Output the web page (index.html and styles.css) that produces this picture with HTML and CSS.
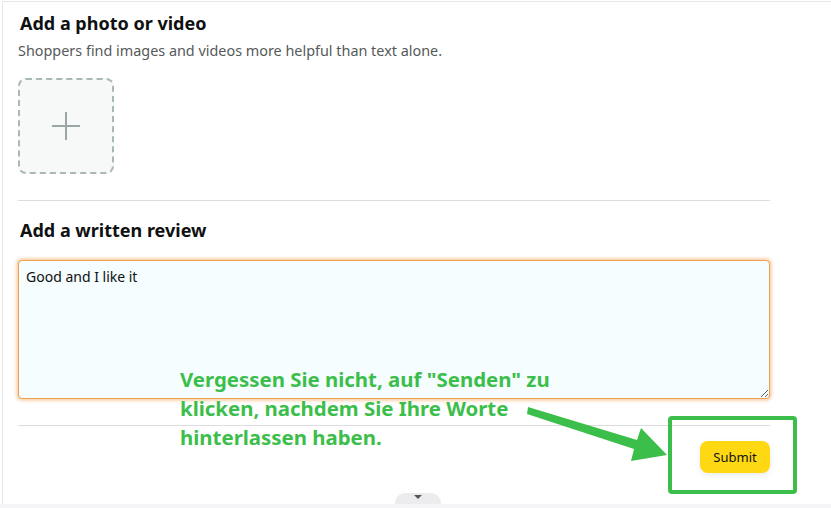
FILE: index.html
```html
<!DOCTYPE html>
<html lang="en">
<head>
  <meta charset="UTF-8">
  <meta name="viewport" content="width=device-width, initial-scale=1.0">
  <title>Review</title>
  <link rel="stylesheet" href="styles.css">
</head>
<body>
  <div class="page">
    <section class="section">
      <h2 class="title">Add a photo or video</h2>
      <p class="hint">Shoppers find images and videos more helpful than text alone.</p>
      <button class="upload">
        <svg width="30" height="30" viewBox="0 0 30 30">
          <path d="M15 1 V29 M1 15 H29" stroke="#9aa5a6" stroke-width="2" fill="none"/>
        </svg>
      </button>
    </section>
    <section class="section written">
      <h2 class="title">Add a written review</h2>
      <textarea class="review">Good and I like it</textarea>
    </section>
    <div class="footer">
      <button class="submit">Submit</button>
    </div>
    <div class="tab"><span class="tab-arrow"></span></div>
  </div>
  <div class="bottom-band"></div>

  <div class="note">Vergessen Sie nicht, auf "Senden" zu<br>klicken, nachdem Sie Ihre Worte<br>hinterlassen haben.</div>
  <svg class="arrow" width="831" height="508" viewBox="0 0 831 508">
    <path d="M528 407 L637 440 L641 428 L667 455 L631 461 L634 449 L527 414 Z" fill="#3cbe4b"/>
  </svg>
  <div class="highlight"></div>
</body>
</html>
```

FILE: styles.css
```css
body {
  margin: 0;
  font-family: "Noto Sans", "Open Sans", Arial, sans-serif;
  background-color: #fff;
  color: #0f1111;
  width: 831px;
  height: 508px;
  overflow: hidden;
  position: relative;
}

.page {
  margin-left: 2px;
  margin-top: 1px;
  border-left: 1px solid #e7e7e7;
  border-top: 1px solid #e7e7e7;
  height: 502px;
  padding: 0 61px 0 15px;
  position: relative;
}

.section {
  border-bottom: 1px solid #dddddd;
  padding-top: 9px;
}

.title {
  margin: 0 0 0 2px;
  font-size: 18px;
  font-weight: 700;
  line-height: 24px;
}

.hint {
  margin: 6px 0 0 0;
  font-size: 14.4px;
  color: #565959;
  line-height: 20px;
}

.upload {
  display: flex;
  align-items: center;
  justify-content: center;
  width: 96px;
  height: 96px;
  margin: 17px 0 26px 0;
  background: #f7f8f8;
  border: 2px dashed #aab7b8;
  border-radius: 8px;
  padding: 0;
}

.written {
  padding-top: 17px;
}

.review {
  display: block;
  box-sizing: border-box;
  width: 752px;
  height: 139px;
  margin: 18px 0 26px 0;
  padding: 6px 7px;
  background: #f5fdff;
  border: 1px solid #eda052;
  border-radius: 4px;
  box-shadow: 0 0 3px 2px rgba(240, 160, 80, 0.45);
  font-family: "Noto Sans", "Open Sans", Arial, sans-serif;
  font-size: 14px;
  line-height: 20px;
  color: #0f1111;
  outline: none;
}

.footer {
  display: flex;
  justify-content: flex-end;
  padding-top: 15px;
}

.submit {
  background: #ffd814;
  border: none;
  border-radius: 8px;
  width: 70px;
  height: 32px;
  font-family: "Noto Sans", "Open Sans", Arial, sans-serif;
  font-size: 13px;
  color: #0f1111;
  box-shadow: 0 2px 5px rgba(213, 217, 217, 0.5);
}

.tab {
  position: absolute;
  left: 392px;
  bottom: 0;
  width: 46px;
  height: 9px;
  background: #ececee;
  border-radius: 10px 10px 0 0;
  display: flex;
  justify-content: center;
  padding-top: 2px;
}

.tab-arrow {
  width: 0;
  height: 0;
  border-left: 4px solid transparent;
  border-right: 4px solid transparent;
  border-top: 4px solid #555;
}

.bottom-band {
  height: 5px;
  background: #f5f5f7;
}

.note {
  position: absolute;
  left: 180px;
  top: 365px;
  font-size: 20.4px;
  font-weight: 700;
  line-height: 29px;
  color: #3cbe4b;
}

.arrow {
  position: absolute;
  left: 0;
  top: 0;
}

.highlight {
  position: absolute;
  left: 668px;
  top: 416px;
  width: 121px;
  height: 70px;
  border: 4px solid #3cbe4b;
  border-radius: 4px;
}
```
